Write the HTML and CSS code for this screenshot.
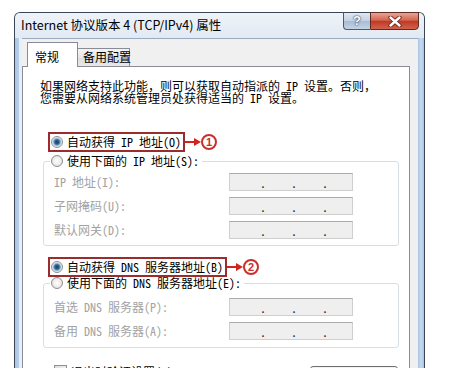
FILE: index.html
```html
<!DOCTYPE html>
<html lang="zh-CN">
<head>
<meta charset="utf-8">
<title>Internet 协议版本 4 (TCP/IPv4) 属性</title>
<link rel="stylesheet" href="styles.css">
</head>
<body>
<div class="window">
  <div class="titlebar">
    <span class="title">Internet 协议版本 4 (TCP/IPv4) 属性</span>
    <div class="caption">
      <span class="cbtn help">?</span>
      <span class="cbtn close">
        <svg width="14" height="11" viewBox="0 0 14 11">
          <path d="M2.5 1.5 L11.5 9.5 M11.5 1.5 L2.5 9.5" stroke="#6b2418" stroke-width="4.2" stroke-linecap="round" fill="none"/>
          <path d="M2.5 1.5 L11.5 9.5 M11.5 1.5 L2.5 9.5" stroke="#ffffff" stroke-width="2.4" stroke-linecap="round" fill="none"/>
        </svg>
      </span>
    </div>
  </div>
  <div class="dialog">
    <div class="tabs">
      <span class="tab active">常规</span>
      <span class="tab">备用配置</span>
    </div>
    <div class="panel sim">
      <p class="intro">如果网络支持此功能，则可以获取自动指派的 IP 设置。否则，<br>您需要从网络系统管理员处获得适当的 IP 设置。</p>

      <div class="callout first">
        <span class="opt boxed"><span class="radio on"></span>自动获得 IP 地址(O)</span>
        <svg class="arrow" width="16" height="10" viewBox="0 0 16 10">
          <path d="M0 5 H10" stroke="#d3231e" stroke-width="2"/>
          <path d="M9 1 L16 5 L9 9 Z" fill="#d3231e"/>
        </svg>
        <span class="num">1</span>
      </div>

      <fieldset class="group g1">
        <legend><span class="opt"><span class="radio"></span>使用下面的 IP 地址(S):</span></legend>
        <div class="field"><span class="lbl">IP 地址(I):</span><span class="ip"><i>.</i><i>.</i><i>.</i></span></div>
        <div class="field"><span class="lbl">子网掩码(U):</span><span class="ip"><i>.</i><i>.</i><i>.</i></span></div>
        <div class="field"><span class="lbl">默认网关(D):</span><span class="ip"><i>.</i><i>.</i><i>.</i></span></div>
      </fieldset>

      <div class="callout second">
        <span class="opt boxed"><span class="radio on"></span>自动获得 DNS 服务器地址(B)</span>
        <svg class="arrow" width="16" height="10" viewBox="0 0 16 10">
          <path d="M0 5 H10" stroke="#d3231e" stroke-width="2"/>
          <path d="M9 1 L16 5 L9 9 Z" fill="#d3231e"/>
        </svg>
        <span class="num">2</span>
      </div>

      <fieldset class="group g2">
        <legend><span class="opt"><span class="radio"></span>使用下面的 DNS 服务器地址(E):</span></legend>
        <div class="field"><span class="lbl">首选 DNS 服务器(P):</span><span class="ip"><i>.</i><i>.</i><i>.</i></span></div>
        <div class="field"><span class="lbl">备用 DNS 服务器(A):</span><span class="ip"><i>.</i><i>.</i><i>.</i></span></div>
      </fieldset>

      <div class="footer">
        <span class="chk"><span class="box"></span>退出时验证设置(V)</span>
        <span class="btn">高级(V)...</span>
      </div>
    </div>
  </div>
</div>
</body>
</html>
```

FILE: styles.css
```css
* { box-sizing: border-box; }

html, body {
  margin: 0;
  height: 368px;
  overflow: hidden;
  background: #ffffff;
}

body {
  font-family: "Noto Sans CJK SC", "Liberation Sans", sans-serif;
  font-size: 12px;
  color: #000;
}

.window {
  width: 411px;
  height: 400px;
  margin: 12px 0 0 14px;
  border: 1px solid #3a4656;
  border-bottom: 0;
  border-radius: 6px 6px 0 0;
  background: linear-gradient(to right,
    #abc5e5 0, #b8cfea 4px, #e6eef7 4px, #e6eef7 7px,
    #f0f0f0 7px, #f0f0f0 403px,
    #a9c3e3 403px, #c8daef 406px, #a9c3e3 409px);
  display: flex;
  flex-direction: column;
}

.titlebar {
  height: 25px;
  flex: none;
  display: flex;
  align-items: flex-start;
  padding-left: 6px;
  background: linear-gradient(#eef3f9, #e1e9f3);
  border-radius: 5px 5px 0 0;
}

.title {
  font-size: 12.5px;
  line-height: 23px;
  white-space: nowrap;
}

.caption {
  margin-left: auto;
  margin-right: 5px;
  margin-top: -1px;
  display: flex;
}

.cbtn {
  height: 18px;
  display: flex;
  align-items: center;
  justify-content: center;
  border: 1px solid #4d5a6b;
  border-top-color: #3a4656;
}

.help {
  width: 27px;
  border-right: 0;
  border-radius: 0 0 0 4px;
  background: linear-gradient(#e1e9f2, #c3d1e1 48%, #a9bcd3 52%, #c4d4e7);
  color: #ffffff;
  font-family: "Liberation Sans", sans-serif;
  font-weight: bold;
  font-size: 13px;
  line-height: 16px;
  text-shadow: 0 0 1px #2c3b4f, 0 0 2px #2c3b4f;
}

.close {
  width: 49px;
  border-radius: 0 0 4px 0;
  background: linear-gradient(#e8a494, #d46650 45%, #bf3a26 52%, #d2624a);
  border-color: #5e2a24;
}

.dialog {
  flex: 1;
  margin: 0 6px 0 7px;
  background: #f0f0f0;
  border-top: 1px solid #9aabbf;
  padding-top: 3px;
  display: flex;
  flex-direction: column;
}

.tabs {
  display: flex;
  align-items: flex-end;
  padding-left: 5px;
  height: 24px;
  flex: none;
  position: relative;
  z-index: 1;
}

.tab {
  height: 18px;
  width: 52px;
  padding-left: 5px;
  border: 1px solid #898c95;
  border-bottom: 0;
  border-left: 0;
  background: linear-gradient(#f4f4f4, #e7e7e7 50%, #dcdcdc 50%, #e8e8e8);
  line-height: 16px;
  white-space: nowrap;
}

.tab.active {
  height: 25px;
  width: 51px;
  margin-bottom: -1px;
  padding-left: 7px;
  padding-top: 6px;
  border-left: 1px solid #898c95;
  background: #ffffff;
}

.panel {
  flex: 1;
  background: #ffffff;
  border: 1px solid #898c95;
  margin-right: 8px;
}

.sim {
  font-family: "Noto Sans Mono CJK SC", "Noto Sans CJK SC", monospace;
  font-size: 12px;
}

.intro {
  margin: 13px 0 0 17px;
  line-height: 12px;
  white-space: nowrap;
}

.callout {
  display: flex;
  align-items: center;
  margin-left: 25px;
}

.callout.first { margin-top: 28px; }
.callout.second { margin-top: 11px; }

.opt {
  display: inline-flex;
  align-items: center;
  white-space: nowrap;
  line-height: 12px;
}

.boxed {
  height: 20px;
  border: 2px solid #9c2b2e;
  padding: 0 2px 0 1px;
}

.radio {
  flex: none;
  width: 12px;
  height: 12px;
  margin-right: 4px;
  border-radius: 50%;
  border: 1px solid #8e8f8f;
  background: radial-gradient(circle, #ffffff 0, #ececec 55%, #d2d2d2 100%);
}

.radio.on {
  background: radial-gradient(circle, #173f66 0, #2a5f8c 2px, #5f93bd 3px, #b9cfe2 4px, #f2f2f2 5px, #e2e2e2 100%);
}

.arrow { flex: none; }

.num {
  flex: none;
  width: 16px;
  height: 16px;
  border: 2px solid #c9302c;
  border-radius: 50%;
  color: #c9302c;
  font-family: "Liberation Sans", sans-serif;
  font-weight: bold;
  font-size: 11px;
  line-height: 12px;
  text-align: center;
}

.group {
  margin: 3px 0 0 20px;
  width: 356px;
  min-width: 0;
  border: 1px solid #d5dfe5;
  border-radius: 3px;
  padding: 6px 0 6px 10px;
}

.group.g2 {
  margin-top: 0;
  padding-top: 9px;
  padding-bottom: 7px;
}

.group legend {
  margin-left: -4px;
  padding: 0 3px 0 1px;
  height: 12px;
  line-height: 12px;
}

.field {
  display: flex;
  align-items: center;
  height: 18px;
}

.field + .field { margin-top: 6px; }

.lbl {
  width: 175px;
  color: #a2a2a2;
  white-space: nowrap;
  line-height: 12px;
}

.ip {
  width: 124px;
  height: 18px;
  border: 1px solid #cfcfcf;
  border-top-color: #ababab;
  background: #efefef;
  display: flex;
  padding-left: 30px;
  gap: 25px;
  line-height: 18px;
}

.ip i {
  font-style: normal;
  width: 6px;
  color: #1a1a1a;
}

.footer {
  display: flex;
  justify-content: space-between;
  align-items: flex-start;
  width: 344px;
  margin: 17px 0 0 31px;
}

.chk {
  display: inline-flex;
  align-items: flex-start;
  white-space: nowrap;
  line-height: 13px;
}

.box {
  width: 13px;
  height: 13px;
  margin-right: 4px;
  border: 1px solid #8e8f8f;
  background: linear-gradient(135deg, #dcdcdc, #ffffff);
}

.btn {
  width: 88px;
  height: 23px;
  margin-top: 1px;
  border: 1px solid #707070;
  border-radius: 3px;
  background: linear-gradient(#f2f2f2, #ebebeb 50%, #dddddd 50%, #cfcfcf);
  text-align: center;
  line-height: 21px;
}
```
